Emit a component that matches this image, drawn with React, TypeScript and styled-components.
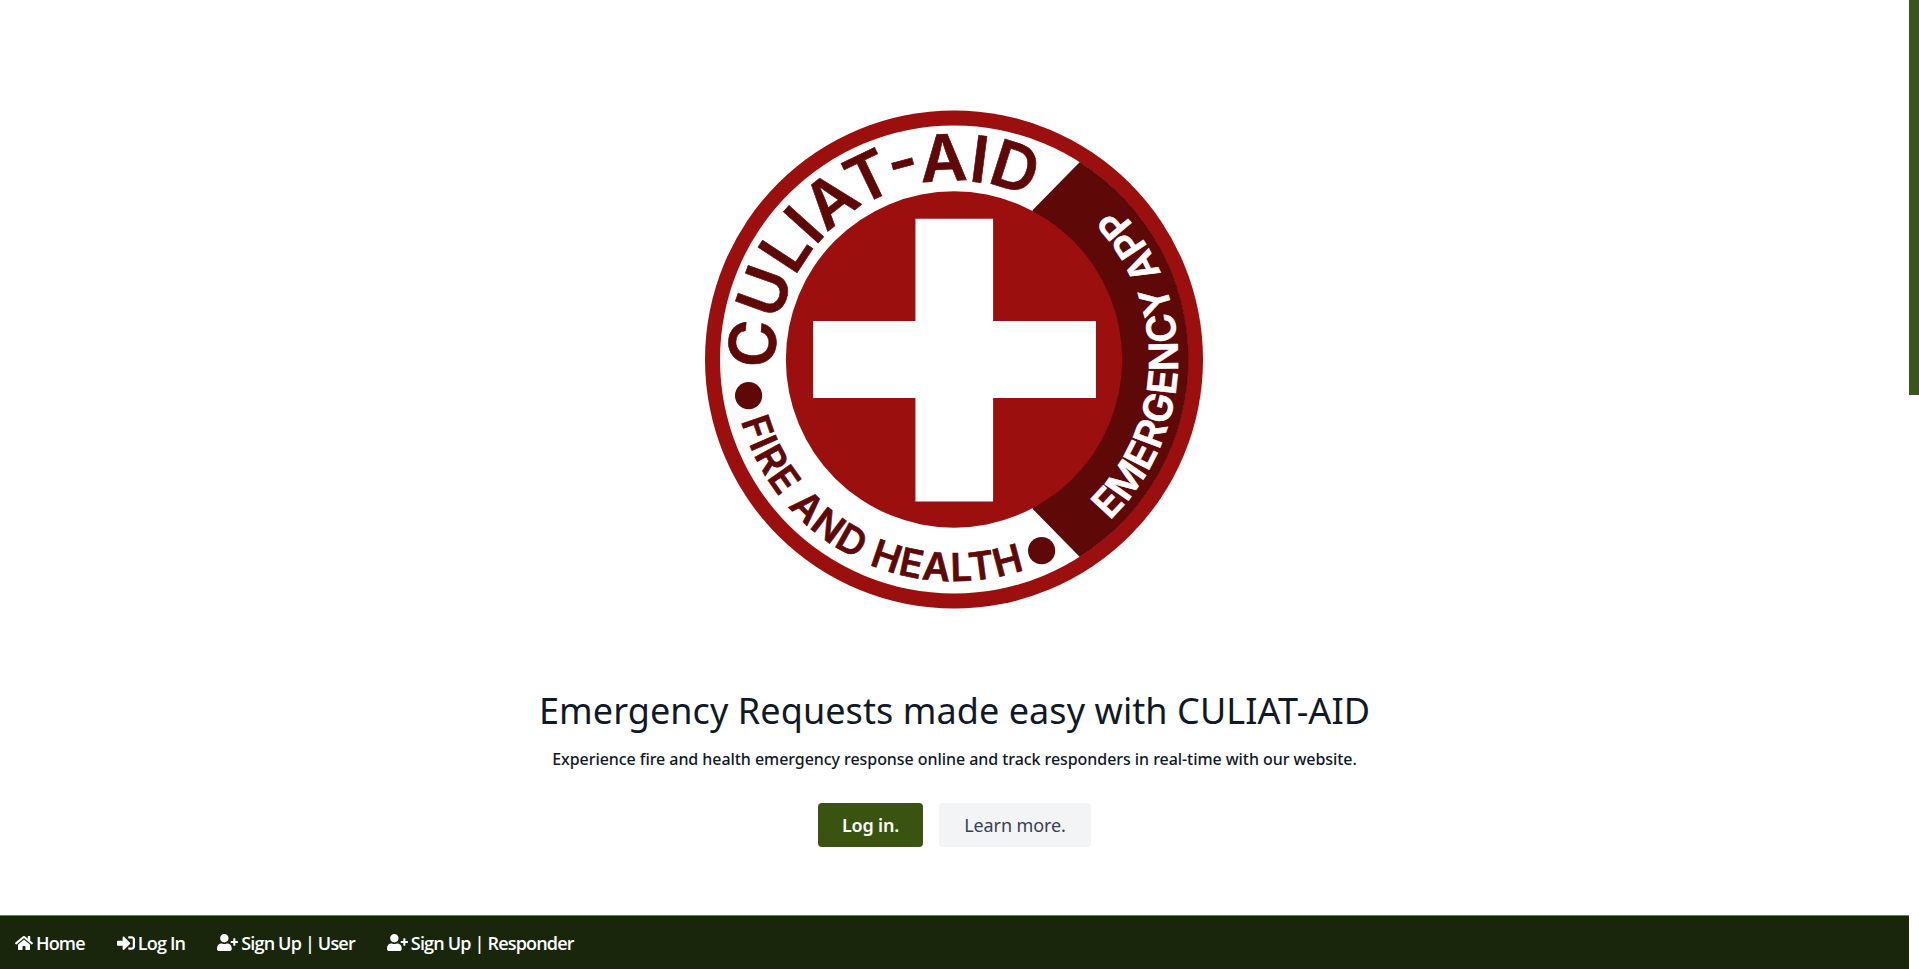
import React from 'react';
import styled, { createGlobalStyle } from 'styled-components';
import { FaHome, FaSignInAlt, FaUserPlus } from 'react-icons/fa';

const BODY_FONT = '"Noto Sans", "Open Sans", sans-serif';

const GlobalStyle = createGlobalStyle`
  html, body {
    margin: 0;
    padding: 0;
    background: #fff;
  }
  * {
    box-sizing: border-box;
  }
`;

const Page = styled.div`
  height: 100vh;
  display: flex;
  overflow: hidden;
  font-family: ${BODY_FONT};
`;

const Main = styled.div`
  flex: 1;
  min-width: 0;
  display: flex;
  flex-direction: column;
`;

const ScrollRail = styled.div`
  width: 10px;
  flex-shrink: 0;
`;

const ScrollThumb = styled.div`
  height: 395px;
  background: #38561a;
`;

const Hero = styled.section`
  flex: 1;
  display: flex;
  flex-direction: column;
  align-items: center;
  padding-top: 110px;
`;

const LogoSvg = styled.svg`
  width: 498px;
  height: 499px;
  margin-right: 2px;
  display: block;
`;

const Heading = styled.h1`
  margin: 78px 0 0;
  font-size: 36px;
  line-height: 48px;
  font-weight: 400;
  letter-spacing: 0.07px;
  color: #111827;
`;

const Lead = styled.p`
  margin: 12px 0 0;
  font-size: 16px;
  line-height: 24px;
  font-weight: 500;
  letter-spacing: -0.06px;
  color: #111827;
`;

const Actions = styled.div`
  margin-top: 32px;
  display: flex;
  gap: 16px;
`;

const Button = styled.a<{ $primary?: boolean }>`
  height: 44px;
  width: ${(p) => (p.$primary ? '105px' : '152px')};
  display: flex;
  align-items: center;
  justify-content: center;
  border-radius: 4px;
  font-size: 18px;
  letter-spacing: ${(p) => (p.$primary ? '-0.2px' : '-0.1px')};
  font-weight: ${(p) => (p.$primary ? 600 : 400)};
  color: ${(p) => (p.$primary ? '#fff' : '#374151')};
  background: ${(p) => (p.$primary ? '#3a5311' : '#f3f4f6')};
`;

const BottomNav = styled.nav`
  height: 54px;
  flex-shrink: 0;
  display: flex;
  align-items: center;
  gap: 32px;
  padding: 0 15px;
  background: #1a260c;
  border-top: 1px solid #5d8a2e;
`;

const NavLink = styled.a`
  display: flex;
  align-items: center;
  gap: 3px;
  font-family: "Open Sans", sans-serif;
  font-size: 18px;
  font-weight: 600;
  letter-spacing: -0.82px;
  color: #fff;
`;

const C = 232.5;

// angles are clockwise from north
function arc(r: number, from: number, to: number, sweep: 0 | 1) {
  const pt = (a: number) => {
    const t = (a * Math.PI) / 180;
    return `${(C + r * Math.sin(t)).toFixed(2)} ${(C - r * Math.cos(t)).toFixed(2)}`;
  };
  const large = Math.abs(to - from) > 180 ? 1 : 0;
  return `M${pt(from)} A${r} ${r} 0 ${large} ${sweep} ${pt(to)}`;
}

const RED = '#9b0f0f';
const DARK = '#5e0808';

const LogoText = styled.text<{ $size: number; $light?: boolean }>`
  font-family: Inter, "Liberation Sans", sans-serif;
  font-weight: 600;
  font-size: ${(p) => p.$size}px;
  fill: ${(p) => (p.$light ? '#fff' : DARK)};
  stroke: ${(p) => (p.$light ? '#fff' : DARK)};
  stroke-width: 0.6px;
`;

function Logo() {
  return (
    <LogoSvg viewBox="0 0 465 465" role="img" aria-label="CULIAT-AID logo">
      <defs>
        <path id="arc-name" d={arc(167, -93, 26, 1)} />
        <path id="arc-tag" d={arc(207, 253.9, 160, 0)} />
        <path id="arc-app" d={arc(209, 136, 46, 0)} />
      </defs>
      <circle cx={C} cy={C} r={C} fill={RED} />
      <circle cx={C} cy={C} r={218.5} fill="#fff" />
      <path d="M350 48 A218.5 218.5 0 0 1 350 417 L306 372 L306 93 Z" fill={DARK} />
      <circle cx={C} cy={C} r={157} fill={RED} />
      <path
        d="M196.5 101 H269 V196.5 H365 V268.5 H269 V365 H196.5 V268.5 H101 V196.5 H196.5 Z"
        fill="#fff"
      />
      <circle cx={40.7} cy={266.3} r={12.7} fill={DARK} />
      <circle cx={314.3} cy={411} r={12.7} fill={DARK} />
      <LogoText $size={60}>
        <textPath href="#arc-name" textLength={344} lengthAdjust="spacing">
          CULIAT-AID
        </textPath>
      </LogoText>
      <LogoText $size={36}>
        <textPath href="#arc-tag" textLength={334} lengthAdjust="spacing">
          FIRE AND HEALTH
        </textPath>
      </LogoText>
      <LogoText $size={37} $light>
        <textPath href="#arc-app" textLength={326} lengthAdjust="spacing">
          EMERGENCY APP
        </textPath>
      </LogoText>
    </LogoSvg>
  );
}

function App() {
  return (
    <Page>
      <GlobalStyle />
      <Main>
        <Hero>
          <Logo />
          <Heading>Emergency Requests made easy with CULIAT-AID</Heading>
          <Lead>
            Experience fire and health emergency response online and track responders in real-time
            with our website.
          </Lead>
          <Actions>
            <Button $primary>Log in.</Button>
            <Button>Learn more.</Button>
          </Actions>
        </Hero>
        <BottomNav>
          <NavLink>
            <FaHome size={18} /> Home
          </NavLink>
          <NavLink>
            <FaSignInAlt size={18} /> Log In
          </NavLink>
          <NavLink>
            <FaUserPlus size={21} /> Sign Up | User
          </NavLink>
          <NavLink>
            <FaUserPlus size={21} /> Sign Up | Responder
          </NavLink>
        </BottomNav>
      </Main>
      <ScrollRail>
        <ScrollThumb />
      </ScrollRail>
    </Page>
  );
}

export default App;
